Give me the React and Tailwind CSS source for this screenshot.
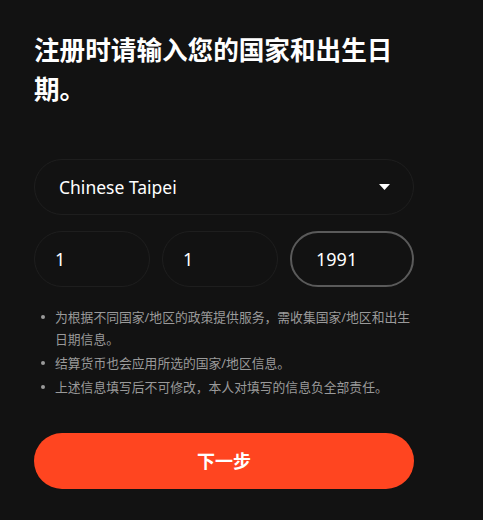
import { useState } from "react";

const notes = [
  "为根据不同国家/地区的政策提供服务，需收集国家/地区和出生日期信息。",
  "结算货币也会应用所选的国家/地区信息。",
  "上述信息填写后不可修改，本人对填写的信息负全部责任。",
];

const App = () => {
  let [day, setDay] = useState("1");
  let [month, setMonth] = useState("1");
  let [year, setYear] = useState("1991");

  return (
    <div
      className="min-h-[520px] w-full bg-[#121212] text-white"
      style={{ fontFamily: '"Noto Sans", "Noto Sans CJK SC", sans-serif' }}
    >
      <div className="ml-[34px] w-[380px] pt-[31px]">
        <h1 className="text-[25.6px] font-bold leading-[39px]">
          注册时请输入您的国家和出生日期。
        </h1>

        <div className="mt-[50px] flex h-[56px] items-center justify-between rounded-full border border-[#1e1e1e] pl-6 pr-[23px]">
          <span className="text-[17.5px]">Chinese Taipei</span>
          <svg width="11" height="6" viewBox="0 0 11 6">
            <path d="M0 0h11L5.5 6z" fill="#fff" />
          </svg>
        </div>

        <div className="mt-4 grid grid-cols-[116px_116px_1fr] gap-3">
          <input
            value={day}
            onChange={(e) => setDay(e.target.value)}
            className="h-[56px] w-full min-w-0 rounded-full border border-[#1e1e1e] bg-transparent pl-5 text-[18px] text-white outline-none"
          />
          <input
            value={month}
            onChange={(e) => setMonth(e.target.value)}
            className="h-[56px] w-full min-w-0 rounded-full border border-[#1e1e1e] bg-transparent pl-5 text-[18px] text-white outline-none"
          />
          <input
            value={year}
            onChange={(e) => setYear(e.target.value)}
            className="h-[56px] w-full min-w-0 rounded-full border-2 border-[#5a5a5a] bg-transparent pl-6 text-[18px] text-white outline-none"
          />
        </div>

        <ul className="mt-[19px] flex flex-col gap-[2px]">
          {notes.map((n) => (
            <li key={n} className="flex text-[12.8px] leading-[22px] text-[#9a9a9a]">
              <span className="mt-[9px] ml-[7px] mr-[10px] h-[4px] w-[4px] shrink-0 rounded-full bg-[#9a9a9a]" />
              <span>{n}</span>
            </li>
          ))}
        </ul>

        <button className="mt-[35px] flex h-[56px] w-full items-center justify-center rounded-full bg-[#ff4520] text-[18px] font-bold text-white">
          下一步
        </button>
      </div>
    </div>
  );
};

export default App;
